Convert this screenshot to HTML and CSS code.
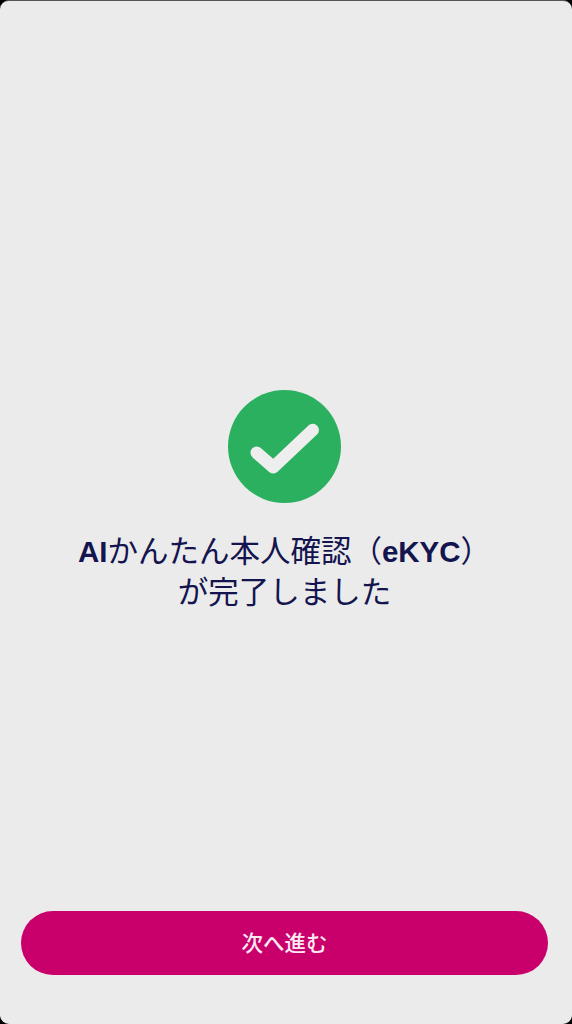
FILE: index.html
```html
<!DOCTYPE html>
<html lang="ja">
<head>
<meta charset="utf-8">
<title>eKYC完了</title>
<link rel="stylesheet" href="styles.css">
</head>
<body>
<div class="screen">
  <main class="content">
    <svg class="check" viewBox="0 0 113 113" aria-hidden="true">
      <circle cx="56.5" cy="56.5" r="56.5" fill="#2bb060"/>
      <path d="M28.7 62.7 L45.3 77.3 L84.7 40" fill="none" stroke="#eeeeee" stroke-width="12.5" stroke-linecap="round" stroke-linejoin="round"/>
    </svg>
    <h1 class="title"><b>AI</b>かんたん本人確認（<b>eKYC</b>）<br>が完了しました</h1>
  </main>
  <button class="next" type="button">次へ進む</button>
</div>
</body>
</html>
```

FILE: styles.css
```css
html, body {
  margin: 0;
  padding: 0;
  background: #000;
}
.screen {
  box-sizing: border-box;
  width: 572px;
  height: 1024px;
  display: flex;
  flex-direction: column;
  background: #ebebeb;
  border-top: 1px solid #555;
  border-radius: 9px;
  overflow: hidden;
  font-family: "Noto Sans CJK JP", "Noto Sans", sans-serif;
}
.content {
  flex: 1;
  display: flex;
  flex-direction: column;
  align-items: center;
  padding: 389px 3px 0 0;
}
.check {
  width: 113px;
  height: 113px;
  display: block;
}
.title {
  margin: 27px 0 0;
  font-size: 30.5px;
  line-height: 38px;
  font-weight: 400;
  color: #14144f;
  text-align: center;
  white-space: nowrap;
}
.title b {
  font-family: "Liberation Sans", sans-serif;
  font-size: 29.5px;
  font-weight: 700;
}
.next {
  display: block;
  height: 64px;
  margin: 0 24px 49px 21px;
  padding: 0 0 3px;
  border: 0;
  border-radius: 32px;
  background: #c9006b;
  color: #fbeaf2;
  font-family: "Noto Sans CJK JP", sans-serif;
  font-size: 21.5px;
  font-weight: 500;
}
```
